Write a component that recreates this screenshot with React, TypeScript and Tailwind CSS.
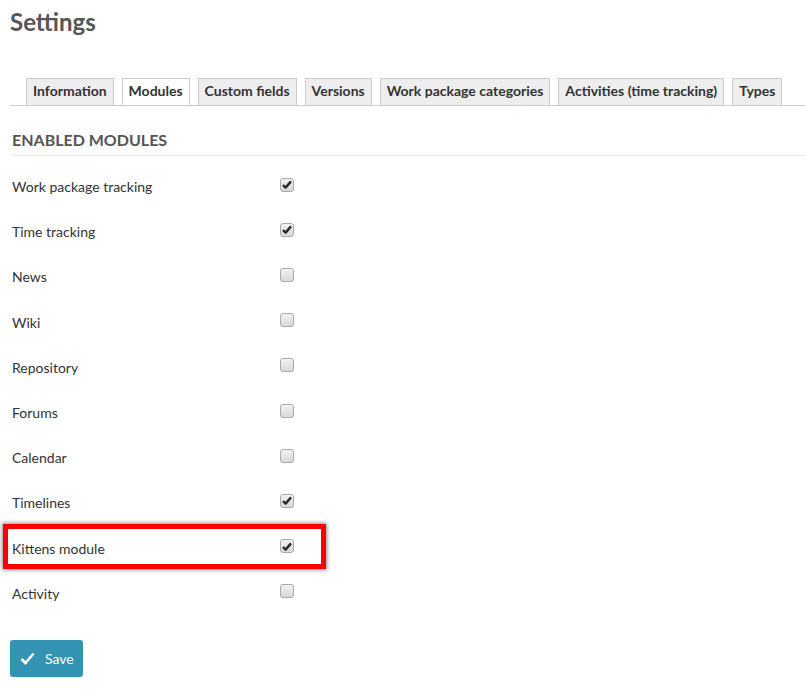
import { useState } from 'react';

const TABS = [
  'Information',
  'Modules',
  'Custom fields',
  'Versions',
  'Work package categories',
  'Activities (time tracking)',
  'Types',
];

const MODULES: { name: string; enabled: boolean; highlight?: boolean }[] = [
  { name: 'Work package tracking', enabled: true },
  { name: 'Time tracking', enabled: true },
  { name: 'News', enabled: false },
  { name: 'Wiki', enabled: false },
  { name: 'Repository', enabled: false },
  { name: 'Forums', enabled: false },
  { name: 'Calendar', enabled: false },
  { name: 'Timelines', enabled: true },
  { name: 'Kittens module', enabled: true, highlight: true },
  { name: 'Activity', enabled: false },
];

function Checkbox({ checked, onChange }: { checked: boolean; onChange: () => void }) {
  return (
    <button
      type="button"
      onClick={onChange}
      className="mb-[4px] flex size-[14px] items-center justify-center rounded-[3px] border border-[#aaa] bg-gradient-to-b from-[#f2f2f2] to-[#d8d8d8]"
    >
      {checked ? (
        <svg width="10" height="9" viewBox="0 0 10 9">
          <path d="M1 5 L3.6 7.6 L9 1.4" fill="none" stroke="#2a2a2a" strokeWidth="2.4" strokeLinejoin="round" />
        </svg>
      ) : null}
    </button>
  );
}

export default function App() {
  const [enabled, setEnabled] = useState<Record<string, boolean>>(
    Object.fromEntries(MODULES.map((m) => [m.name, m.enabled])),
  );

  return (
    <div className="min-h-[690px] bg-white pl-[10px] font-['Lato',sans-serif] text-[#333]">
      <h1 className="pt-[8px] text-[24px] font-bold leading-[1.2] text-[#555]">Settings</h1>

      <div className="mt-[41px] flex gap-2 border-b border-[#ccc] pl-4">
        {TABS.map((tab) => (
          <div
            key={tab}
            className={
              'flex h-[27px] items-center border border-b-0 border-[#ccc] px-[6px] pb-[3px] text-[14px] font-bold text-[#333] ' +
              (tab === 'Modules' ? 'bg-white' : 'bg-[#eee]')
            }
          >
            {tab}
          </div>
        ))}
      </div>

      <h2 className="ml-[2px] mt-[24px] border-b border-[#e8e8e8] pb-[6px] text-[16px] font-bold uppercase leading-[1.2] text-[#555]">
        Enabled modules
      </h2>

      <div className="mt-[8px]">
        {MODULES.map((m) => (
          <div key={m.name} className="relative flex h-[45.2px] items-center pl-[2px]">
            {m.highlight ? (
              <div className="pointer-events-none absolute left-[-7px] top-[-1px] h-[45px] w-[323px] border-[5px] border-[#ff0000] shadow-[0_0_4px_1px_rgba(0,0,0,0.45)]" />
            ) : null}
            <span className="w-[268px] text-[14px] text-[#333]">{m.name}</span>
            <Checkbox
              checked={!!enabled[m.name]}
              onChange={() => setEnabled((prev) => ({ ...prev, [m.name]: !prev[m.name] }))}
            />
          </div>
        ))}
      </div>

      <button
        type="button"
        className="mt-[24px] flex h-[37px] w-[73px] items-center gap-[10px] rounded-[3px] bg-[#3493b3] pl-[10px] text-[14px] text-white"
      >
        <svg width="15" height="13" viewBox="0 0 15 13">
          <path d="M1.5 7 L5.5 11 L13.5 1.5" fill="none" stroke="white" strokeWidth="2.6" />
        </svg>
        Save
      </button>
    </div>
  );
}
